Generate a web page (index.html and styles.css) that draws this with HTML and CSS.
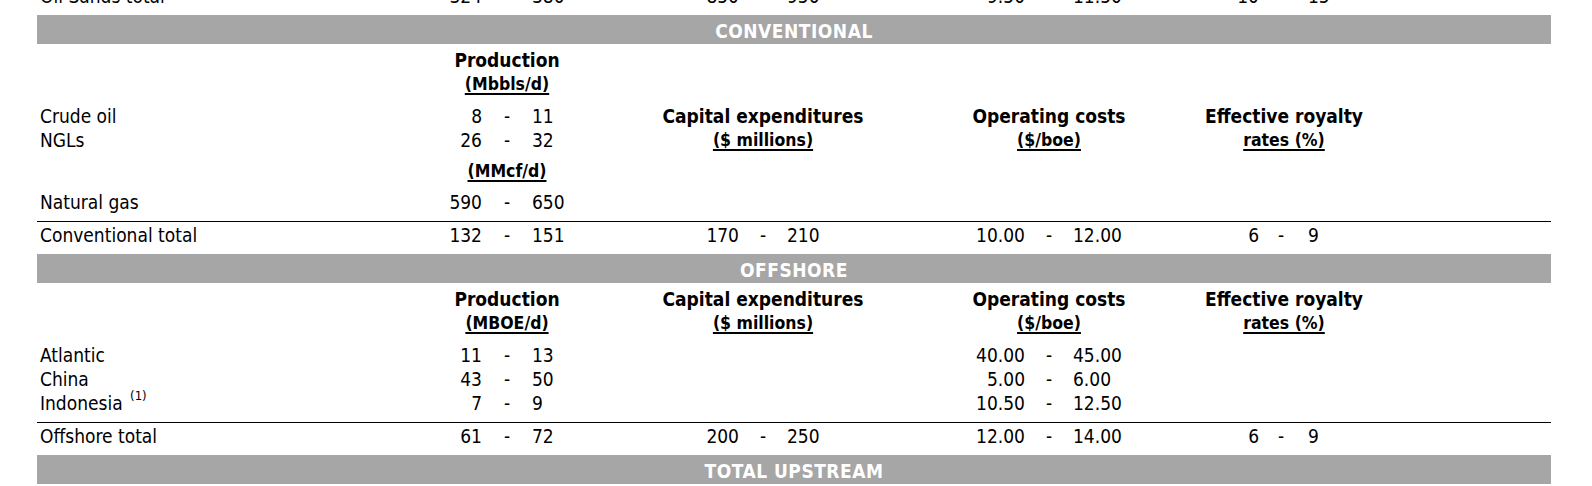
FILE: index.html
```html
<!DOCTYPE html>
<html lang="en">
<head>
<meta charset="utf-8">
<title>Upstream guidance</title>
<link rel="stylesheet" href="styles.css">
</head>
<body>
<table class="sheet">
  <colgroup>
    <col class="c-label">
    <col class="c-lo"><col class="c-dash-p"><col class="c-hi">
    <col class="c-gap1">
    <col class="c-lo"><col class="c-dash"><col class="c-hi">
    <col class="c-gap2">
    <col class="c-lo"><col class="c-dash"><col class="c-hi">
    <col class="c-gap3">
    <col class="c-lo"><col class="c-dash-r"><col class="c-hi">
    <col class="c-tail">
  </colgroup>
  <tbody>
    <tr class="total">
      <td class="lbl">Oil Sands total</td>
      <td class="lo">324</td><td class="da">-</td><td class="hi">380</td><td></td>
      <td class="lo">850</td><td class="da">-</td><td class="hi">950</td><td></td>
      <td class="lo">9.50</td><td class="da">-</td><td class="hi">11.50</td><td></td>
      <td class="lo">10</td><td class="da">-</td><td class="hi hi-r">15</td><td></td>
    </tr>

    <tr class="bar"><td colspan="17">CONVENTIONAL</td></tr>

    <tr class="head">
      <td></td>
      <td colspan="3" class="hd"><div>Production</div></td>
      <td colspan="13"></td>
    </tr>
    <tr class="unit">
      <td></td>
      <td colspan="3" class="hd"><div><span class="un">(Mbbls/d)</span></div></td>
      <td colspan="13"></td>
    </tr>
    <tr class="first">
      <td class="lbl">Crude oil</td>
      <td class="lo">8</td><td class="da">-</td><td class="hi">11</td><td></td>
      <td colspan="3" class="hd"><div>Capital expenditures</div></td><td></td>
      <td colspan="3" class="hd"><div>Operating costs</div></td><td></td>
      <td colspan="3" class="hd hd-r"><div>Effective royalty</div></td><td></td>
    </tr>
    <tr class="data">
      <td class="lbl">NGLs</td>
      <td class="lo">26</td><td class="da">-</td><td class="hi">32</td><td></td>
      <td colspan="3" class="hd"><div><span class="un">($ millions)</span></div></td><td></td>
      <td colspan="3" class="hd"><div><span class="un">($/boe)</span></div></td><td></td>
      <td colspan="3" class="hd hd-r"><div><span class="un">rates (%)</span></div></td><td></td>
    </tr>
    <tr class="sub">
      <td></td>
      <td colspan="3" class="hd"><div><span class="un">(MMcf/d)</span></div></td>
      <td colspan="13"></td>
    </tr>
    <tr class="sub last">
      <td class="lbl">Natural gas</td>
      <td class="lo">590</td><td class="da">-</td><td class="hi">650</td>
      <td colspan="13"></td>
    </tr>
    <tr class="total">
      <td class="lbl">Conventional total</td>
      <td class="lo">132</td><td class="da">-</td><td class="hi">151</td><td></td>
      <td class="lo">170</td><td class="da">-</td><td class="hi">210</td><td></td>
      <td class="lo">10.00</td><td class="da">-</td><td class="hi">12.00</td><td></td>
      <td class="lo">6</td><td class="da">-</td><td class="hi hi-r">9</td><td></td>
    </tr>

    <tr class="bar"><td colspan="17">OFFSHORE</td></tr>

    <tr class="head">
      <td></td>
      <td colspan="3" class="hd"><div>Production</div></td><td></td>
      <td colspan="3" class="hd"><div>Capital expenditures</div></td><td></td>
      <td colspan="3" class="hd"><div>Operating costs</div></td><td></td>
      <td colspan="3" class="hd hd-r"><div>Effective royalty</div></td><td></td>
    </tr>
    <tr class="unit">
      <td></td>
      <td colspan="3" class="hd"><div><span class="un">(MBOE/d)</span></div></td><td></td>
      <td colspan="3" class="hd"><div><span class="un">($ millions)</span></div></td><td></td>
      <td colspan="3" class="hd"><div><span class="un">($/boe)</span></div></td><td></td>
      <td colspan="3" class="hd hd-r"><div><span class="un">rates (%)</span></div></td><td></td>
    </tr>
    <tr class="first">
      <td class="lbl">Atlantic</td>
      <td class="lo">11</td><td class="da">-</td><td class="hi">13</td>
      <td colspan="5"></td>
      <td class="lo">40.00</td><td class="da">-</td><td class="hi">45.00</td>
      <td colspan="5"></td>
    </tr>
    <tr class="data">
      <td class="lbl">China</td>
      <td class="lo">43</td><td class="da">-</td><td class="hi">50</td>
      <td colspan="5"></td>
      <td class="lo">5.00</td><td class="da">-</td><td class="hi">6.00</td>
      <td colspan="5"></td>
    </tr>
    <tr class="data last">
      <td class="lbl">Indonesia <sup class="note">(1)</sup></td>
      <td class="lo">7</td><td class="da">-</td><td class="hi">9</td>
      <td colspan="5"></td>
      <td class="lo">10.50</td><td class="da">-</td><td class="hi">12.50</td>
      <td colspan="5"></td>
    </tr>
    <tr class="total">
      <td class="lbl">Offshore total</td>
      <td class="lo">61</td><td class="da">-</td><td class="hi">72</td><td></td>
      <td class="lo">200</td><td class="da">-</td><td class="hi">250</td><td></td>
      <td class="lo">12.00</td><td class="da">-</td><td class="hi">14.00</td><td></td>
      <td class="lo">6</td><td class="da">-</td><td class="hi hi-r">9</td><td></td>
    </tr>

    <tr class="bar"><td colspan="17">TOTAL UPSTREAM</td></tr>
  </tbody>
</table>
</body>
</html>
```

FILE: styles.css
```css
html,
body {
  margin: 0;
  background: #ffffff;
}

body {
  font-family: "DejaVu Sans Condensed", "DejaVu Sans", sans-serif;
  font-stretch: condensed;
  font-size: 19px;
  color: #000000;
}

.sheet {
  margin: -18px 0 0 37px;
  width: 1514px;
  table-layout: fixed;
  border-collapse: separate;
  border-spacing: 0;
}

.c-label { width: 381px; }
.c-lo { width: 64px; }
.c-hi { width: 64px; }
.c-dash-p { width: 50px; }
.c-dash { width: 48px; }
.c-dash-r { width: 44px; }
.c-gap1 { width: 79px; }
.c-gap2 { width: 110px; }
.c-gap3 { width: 58px; }
.c-tail { width: 184px; }

.sheet td {
  padding: 0;
  line-height: 20px;
  vertical-align: top;
  white-space: nowrap;
}

.lbl { padding-left: 3px !important; }
.lo { text-align: right; }
.da { text-align: center; }
.hi { text-align: left; }
.hi-r { padding-left: 5px !important; }

.hd > div {
  display: flex;
  justify-content: center;
  font-weight: bold;
}
.hd-r { padding-left: 6px !important; }

.un {
  font-size: 17.5px;
  text-decoration: underline;
  text-decoration-thickness: 2px;
  text-underline-offset: 3px;
}

.note {
  font-size: 13px;
  line-height: 0;
  vertical-align: 10px;
  margin-left: 2px;
}

/* row rhythm */
.head td { padding-top: 6px; }
.unit td { padding-top: 4px; }
.first td { padding-top: 12px; }
.data td { padding-top: 4px; }
.sub td { padding-top: 11px; }
.last td { padding-bottom: 9px; }

.total td {
  border-top: 1px solid #000000;
  padding-top: 3px;
  padding-bottom: 9px;
}

.bar td {
  height: 26px;
  padding-top: 3px;
  line-height: 26px;
  vertical-align: middle;
  background: #a6a6a6;
  color: #ffffff;
  font-weight: bold;
  text-align: center;
  letter-spacing: 0.5px;
}
```
